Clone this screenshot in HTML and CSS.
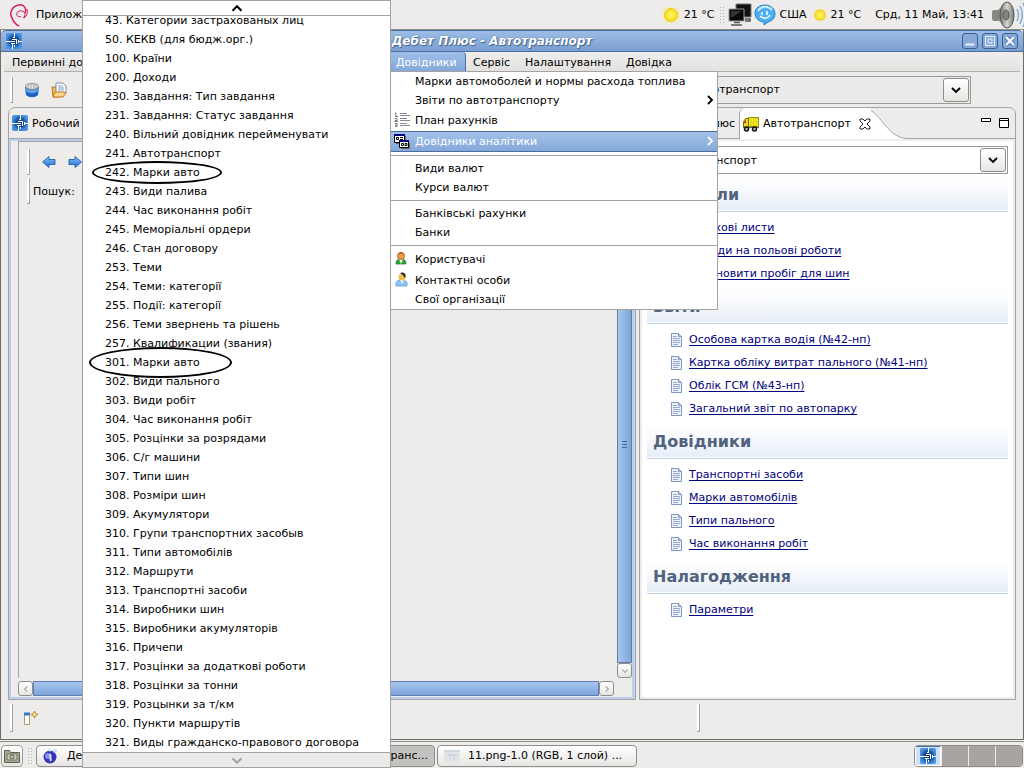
FILE: index.html
```html
<!DOCTYPE html>
<html lang="uk">
<head>
<meta charset="utf-8">
<title>Дебет Плюс - Автотранспорт</title>
<link rel="stylesheet" href="styles.css">
</head>
<body>
<svg class="defs" aria-hidden="true">
  <defs>
    <radialGradient id="blue"><stop offset="0" stop-color="#0f2f60"/><stop offset=".6" stop-color="#1d58a4"/><stop offset="1" stop-color="#4a94e4"/></radialGradient>
    <linearGradient id="arrow" x2="0" y2="1"><stop offset="0" stop-color="#8cc4fa"/><stop offset="1" stop-color="#1a68c8"/></linearGradient>
    <radialGradient id="sun"><stop offset="0" stop-color="#fff56a"/><stop offset="1" stop-color="#f6dc1e"/></radialGradient>
    <linearGradient id="cone"><stop offset="0" stop-color="#6a6c68"/><stop offset=".5" stop-color="#d6d8d2"/><stop offset="1" stop-color="#777974"/></linearGradient>
    <symbol id="logo" viewBox="0 0 16 16"><rect width="16" height="16" rx="2" fill="url(#blue)"/><path d="M8.500 0v5M6 6.500h5M0 8.500h9M5 10.500h4M6.500 11v5M8.500 12v2M10.500 6v5M12.500 7v3M12 8.500h4M7 4.500h2" stroke="#fff" fill="none"/></symbol>
    <symbol id="doc" viewBox="0 0 11 14"><path d="M.5.5h7l3 3v10H.5z" fill="#eef3fb" stroke="#7e95c0"/><path d="M7.500.5v3h3" fill="#b4c3e0" stroke="#7e95c0"/><path d="M2 3.500h4M2 5.500h7M2 7.500h7M2 9.500h7M2 11.500h5" stroke="#94a8d0"/></symbol>
    <symbol id="down" viewBox="0 0 12 8"><path d="M2 2l4 4 4-4" fill="none" stroke="currentColor" stroke-width="1.800"/></symbol>
    <symbol id="right" viewBox="0 0 8 12"><path d="M2 2l4 4-4 4" fill="none" stroke="currentColor" stroke-width="1.800"/></symbol>
    <symbol id="weather" viewBox="0 0 20 20"><path d="M10 0l2 4 4-2v4l4 1-3 3 3 3-4 1v4l-4-2-2 4-2-4-4 2v-4l-4-1 3-3-3-3 4-1V2l4 2z" fill="#f6ec9c"/><circle cx="10" cy="10" r="6.500" fill="url(#sun)" stroke="#ecc42c"/></symbol>
  </defs>
</svg>

<header class="panel">
  <svg class="swirl" viewBox="0 0 20 24"><path d="M12 13.500c-3 1-5-1-4-3.500 2-4 8-2 8 1 0 1 0 3-2 4" fill="none" stroke="#d9185a" stroke-width="1"/><path d="M16 10c2-4-1-9-6-8-7 1-10 8-7 13 1 3 3 6 7 8" fill="none" stroke="#d9185a" stroke-width="1.500"/><path d="M18 6c1 3 0 7-3 9" fill="none" stroke="#d9185a" stroke-width="1"/></svg>
  <span class="apps">Прилож</span>
  <div class="tray">
    <svg class="ic20"><use href="#weather"/></svg><span class="temp">21 °C</span>
    <span class="dots"></span>
    <svg class="ic24" viewBox="0 0 24 24"><path d="M8 1h15v13H8z" fill="#111" stroke="#777"/><path d="M1 6h15v12H1z" fill="#080808" stroke="#999"/><path d="M3 8h11L3 15z" fill="#333"/><path d="M6 19.500h6M3 22h11M17 16h5v2h-5" stroke="#555" stroke-width="1.500" fill="none"/></svg>
    <svg class="ic22" viewBox="0 0 22 22"><path d="M11 1c6 0 10 4 10 9 0 4-3 7-7 8l-4 3v-3C5 18 1 14 1 9c0-5 5-8 10-8z" fill="#4eaef2" stroke="#2580c8"/><path d="M4 7c3-5 10-6 14-1" stroke="#cdeafd" stroke-width="2" fill="none"/><path d="M8 8v3M13 7v4M6 12c3 3 8 3 10-1" stroke="#fff" stroke-width="1.500" fill="none"/></svg>
    <span class="kbd">США</span>
    <svg class="ic16"><use href="#weather"/></svg><span>21 °C</span>
    <time class="clock">Срд, 11 Май, 13:41</time>
    <svg class="speaker" viewBox="0 0 32 28"><path d="M1 9h5v11H1c-2-3-2-8 0-11z" fill="#888"/><path d="M6 9l8-8v26l-8-8z" fill="url(#cone)"/><ellipse cx="15" cy="14" rx="7" ry="13" fill="url(#cone)" stroke="#555752"/><ellipse cx="14" cy="14" rx="3" ry="5" fill="#81837e" stroke="#555"/><path d="M25 8c2 4 2 8 0 12M28 5c3 6 3 12 0 18M31 2c4 8 4 16 0 24" fill="none" stroke="#86acd8" stroke-width="1.500"/></svg>
  </div>
</header>

<main class="window">
  <div class="titlebar">
    <svg class="ic16"><use href="#logo"/></svg>
    <h1>Дебет Плюс - Автотранспорт</h1>
    <button class="wbtn" aria-label="Згорнути"><svg viewBox="0 0 14 14"><path d="M2.500 9.500h9v2h-9z" fill="#e8f0fb"/></svg></button>
    <button class="wbtn" aria-label="Розгорнути"><svg viewBox="0 0 14 14"><path d="M2.500 2.500h9v9h-9zM5 5h4v4H5z" fill="none" stroke="#e4edf9"/></svg></button>
    <button class="wbtn" aria-label="Закрити"><svg viewBox="0 0 14 14"><path d="M3 3l8 8M11 3l-8 8" stroke="#315e92" stroke-width="4"/><path d="M3 3l8 8M11 3l-8 8" stroke="#eef4fc" stroke-width="2.500"/></svg></button>
  </div>

  <nav class="menubar">
    <button class="mitem first">Первинні до</button>
    <div class="menuhost">
      <button class="mitem open">Довідники</button>
      <div class="dropdown">
        <button class="row">Марки автомоболей и нормы расхода топлива</button>
        <button class="row">Звіти по автотранспорту<svg class="sub"><use href="#right"/></svg></button>
        <button class="row tall"><svg class="ric" viewBox="0 0 16 16"><path d="M6 1.500h7M6 3.500h10M6 6.500h7M6 8.500h10M6 11.500h7M6 13.500h10" stroke="#888"/><path d="M1 1h1v3M1 4.500h3M1 6.500h2v2H1v1h3M1 11.500h2v3H1M1 13h2" stroke="#777" fill="none"/></svg>План рахунків</button>
        <button class="row tall active"><svg class="ric" viewBox="0 0 16 16"><path d="M2 2h10v8H2zM7 9h9v6H7z" fill="#666"/><path d="M.5.5h10v8H.5z" fill="#fff" stroke="#000"/><path d="M2.500 3.500h2v2h-2zM6 3.500h3M6 5.500h3" fill="none" stroke="#000"/><path d="M5.500 6.500h9v7h-9z" fill="#fff" stroke="#000"/><path d="M0 1h11M5 7h10" stroke="#000080" stroke-width="2"/><path d="M7.500 9.500h2v2h-2zM11 9.500h2v2h-2z" fill="none" stroke="#000"/></svg>Довідники аналітики<svg class="sub"><use href="#right"/></svg></button>
        <hr>
        <button class="row">Види валют</button>
        <button class="row">Курси валют</button>
        <hr>
        <button class="row">Банківські рахунки</button>
        <button class="row">Банки</button>
        <hr>
        <button class="row tall"><svg class="ric" viewBox="0 0 16 16"><path d="M2 13c0-4 2-5 5-5s5 1 5 5z" fill="#2ea836" stroke="#187020" stroke-width=".7"/><path d="M5 8h4l-2 5z" fill="#fff"/><circle cx="7" cy="5" r="3.500" fill="#f0a044" stroke="#a4521a" stroke-width=".8"/><path d="M4 4c1-4 5-4 6 0-2-2-4-1-6 0z" fill="#b85c1c"/></svg>Користувачі</button>
        <button class="row tall"><svg class="ric" viewBox="0 0 16 16"><path d="M2 14c-1-5 2-6 5-6 4 0 7 1 6 6z" fill="#8fc4f2" stroke="#5796d0" stroke-width=".7"/><path d="M6 8l2 4 2-4z" fill="#e8f4ff"/><circle cx="8" cy="5" r="3.500" fill="#e8c04c"/><path d="M6 1c4-2 7 2 5 5L9 3z" fill="#222"/></svg>Контактні особи</button>
        <button class="row last">Свої організації</button>
      </div>
    </div>
    <button class="mitem">Сервіс</button>
    <button class="mitem">Налаштування</button>
    <button class="mitem">Довідка</button>
  </nav>

  <div class="toolbar">
    <span class="grip"></span>
    <button class="tool" aria-label="База"><svg class="ic16" viewBox="0 0 16 16"><path d="M1 5l1 8c3 3 9 3 12 0l1-8z" fill="#1c62bc"/><path d="M1 6c4 3 10 3 14 0l-1 3c-3 3-9 3-12 0z" fill="#5ca4ee"/><ellipse cx="8" cy="4.500" rx="6.500" ry="3" fill="#e4e4e4" stroke="#888"/><path d="M4 2v4M7 1v6M10 1v6M12 2v4" stroke="#aaa"/></svg></button>
    <button class="tool" aria-label="Відкрити"><svg class="ic16" viewBox="0 0 16 16"><path d="M1 5h4l1-2h2v12H2z" fill="#f0ba58" stroke="#b87820"/><path d="M5 1h7l3 3v7H5z" fill="#fff" stroke="#7d8cb0"/><path d="M7 4h5M7 6h6M7 8h6" stroke="#7d9ac8"/><path d="M4 10h9l2 1-3 4H2z" fill="#fbd686" stroke="#b87820"/></svg></button>
    <label class="combo grey"><select aria-label="Модуль"><option>Автотранспорт</option></select><span class="cbtn"><svg><use href="#down"/></svg></span></label>
  </div>

  <div class="panes">
    <section class="pane left">
      <div class="tabs"><svg class="ic16"><use href="#logo"/></svg><span>Робочий</span></div>
      <div class="view">
        <div class="tools">
          <div class="nav"><span class="grip"></span>
            <button class="tool" aria-label="Назад"><svg viewBox="0 0 14 12"><path d="M.5 6L7 .5v3h6v5H7v3z" fill="url(#arrow)" stroke="#2b6cb8"/></svg></button>
            <button class="tool" aria-label="Вперед"><svg viewBox="0 0 14 12"><path d="M13.500 6L7 .5v3H1v5h6v3z" fill="url(#arrow)" stroke="#2b6cb8"/></svg></button></div>
          <div class="find"><span class="grip"></span><span>Пошук:</span></div>
        </div>
        <div class="vscroll"><span class="vthumb"><i></i></span><button class="sbtn" aria-label="Вниз"><svg><use href="#down"/></svg></button></div>
        <div class="hscroll"><button class="sbtn back" aria-label="Ліворуч"><svg><use href="#right"/></svg></button><span class="hthumb"></span><button class="sbtn" aria-label="Праворуч"><svg><use href="#right"/></svg></button></div>
      </div>
    </section>

    <section class="pane right">
      <div class="tabs">
        <span class="inactive">Дебет Плюс</span>
        <div class="tab">
          <svg class="ic16" viewBox="0 0 16 16"><path d="M5.500 1.500h10v9h-10z" fill="#f8ec20" stroke="#988c10"/><path d="M8 2v8M10.500 2v8M13 2v8" stroke="#d8c818"/><path d="M.5 11V6l2-3.500h3V11z" fill="#f0d820" stroke="#776b10"/><path d="M1 6l2-2v3H1z" fill="#c03030"/><path d="M0 11.500h16" stroke="#665" stroke-width="1"/><circle cx="3.500" cy="13" r="2" fill="#bbb" stroke="#111" stroke-width="1.500"/><circle cx="11.500" cy="13" r="2" fill="#bbb" stroke="#111" stroke-width="1.500"/></svg>
          <span>Автотранспорт</span>
          <svg class="close" viewBox="0 0 12 12"><path d="M1 1h3l2 2 2-2h3v2L8 6l3 3v2H8L6 9l-2 2H1V9l3-3-3-3z" fill="#fff" stroke="#222"/></svg>
        </div>
        <svg class="curve" viewBox="0 0 48 32"><path d="M0 32V.5C20 .5 26 31.500 47 31.500V32z" fill="#fff"/><path d="M0 .5C20 .5 24 31.500 47 31.500" fill="none" stroke="#a5a3a1"/></svg>
        <div class="panebtns"><svg class="pmin" viewBox="0 0 10 4"><path d="M.5.5h9v3h-9z" fill="#fff" stroke="#000"/></svg><svg class="pmax" viewBox="0 0 10 10"><path d="M.5.5h9v9h-9z" fill="#fff" stroke="#000"/><path d="M0 2.500h10" stroke="#000"/></svg></div>
      </div>
      <div class="page">
        <label class="combo"><select aria-label="Розділ"><option>Автотранспорт</option></select><span class="cbtn"><svg><use href="#down"/></svg></span></label>
        <div class="sections">
          <h2>Журнали</h2>
          <ul>
            <li><svg class="doc"><use href="#doc"/></svg><a href="#">Шляхові листи</a></li>
            <li><svg class="doc"><use href="#doc"/></svg><a href="#">Наряди на польові роботи</a></li>
            <li><svg class="doc"><use href="#doc"/></svg><a href="#">Встановити пробіг для шин</a></li>
          </ul>
          <h2>Звіти</h2>
          <ul>
            <li><svg class="doc"><use href="#doc"/></svg><a href="#">Особова картка водія (№42-нп)</a></li>
            <li><svg class="doc"><use href="#doc"/></svg><a href="#">Картка обліку витрат пального (№41-нп)</a></li>
            <li><svg class="doc"><use href="#doc"/></svg><a href="#">Облік ГСМ (№43-нп)</a></li>
            <li><svg class="doc"><use href="#doc"/></svg><a href="#">Загальний звіт по автопарку</a></li>
          </ul>
          <h2>Довідники</h2>
          <ul>
            <li><svg class="doc"><use href="#doc"/></svg><a href="#">Транспортні засоби</a></li>
            <li><svg class="doc"><use href="#doc"/></svg><a href="#">Марки автомобілів</a></li>
            <li><svg class="doc"><use href="#doc"/></svg><a href="#">Типи пального</a></li>
            <li><svg class="doc"><use href="#doc"/></svg><a href="#">Час виконання робіт</a></li>
          </ul>
          <h2>Налагодження</h2>
          <ul>
            <li><svg class="doc"><use href="#doc"/></svg><a href="#">Параметри</a></li>
          </ul>
        </div>
      </div>
    </section>
  </div>

  <footer class="status">
    <span class="grip"></span>
    <button class="tool" aria-label="Нове подання"><svg class="ic16" viewBox="0 0 16 16"><path d="M1.500 3.500h5v11h-5z" fill="#fff" stroke="#a8a070"/><path d="M1 4h6" stroke="#3878c0" stroke-width="3"/><path d="M11.500 1l1 2.500L15 4.500l-2.500 1-1 2.500-1-2.500-2.500-1 2.500-1z" fill="#fff0a0" stroke="#b88c18"/></svg></button>
    <span class="mid"></span>
  </footer>
</main>

<footer class="taskbar">
  <button class="desk" aria-label="Робочий стіл"><svg class="ic16" viewBox="0 0 16 16"><path d="M.5 2.500h5l1 2h9v10H.5z" fill="#a8ac94" stroke="#5c6050"/><path d="M3 6h10v6H3z" fill="#c6c9b4" stroke="#74785f"/><circle cx="8" cy="9" r="2" fill="none" stroke="#5c6050"/></svg></button>
  <span class="dots"></span>
  <button class="task"><svg class="ic16" viewBox="0 0 16 16"><circle cx="7" cy="9" r="6.500" fill="#3434b8"/><circle cx="5" cy="8" r="3" fill="#8c90ec"/><path d="M7 6c1 2 0 5 1 7" stroke="#dde" stroke-width="2"/><circle cx="12" cy="3" r="2" fill="#c8dcf0"/><circle cx="7" cy="2" r="1.500" fill="#d8e6f4"/></svg><span>Дебет Плюс</span></button>
  <button class="task pressed"><span>Автотранс...</span></button>
  <button class="task"><svg class="ic16" viewBox="0 0 16 16"><path d="M0 2h16v12H0z" fill="#e4e4e4"/><path d="M0 3h16M3 7h11M6 5v6M10 7v5" stroke="#bccbe0"/></svg><span>11.png-1.0 (RGB, 1 слой) ...</span></button>
  <div class="pager"><span class="cur"><svg class="ic16"><use href="#logo"/></svg></span><span></span><span></span><span></span></div>
</footer>

<div class="submenu">
  <button class="scroll up" aria-label="Вгору"><svg><use href="#down"/></svg></button>
  <ul>
    <li>43. Категории застрахованых лиц</li>
    <li>50. КЕКВ (для бюдж.орг.)</li>
    <li>100. Країни</li>
    <li>200. Доходи</li>
    <li>230. Завдання: Тип завдання</li>
    <li>231. Завдання: Статус завдання</li>
    <li>240. Вільний довідник перейменувати</li>
    <li>241. Автотранспорт</li>
    <li>242. Марки авто<span class="ring small"></span></li>
    <li>243. Види палива</li>
    <li>244. Час виконання робіт</li>
    <li>245. Меморіальні ордери</li>
    <li>246. Стан договору</li>
    <li>253. Теми</li>
    <li>254. Теми: категорії</li>
    <li>255. Події: категорії</li>
    <li>256. Теми звернень та рішень</li>
    <li>257. Квалификации (звания)</li>
    <li>301. Марки авто<span class="ring"></span></li>
    <li>302. Види пального</li>
    <li>303. Види робіт</li>
    <li>304. Час виконання робіт</li>
    <li>305. Розцінки за розрядами</li>
    <li>306. С/г машини</li>
    <li>307. Типи шин</li>
    <li>308. Розміри шин</li>
    <li>309. Акумулятори</li>
    <li>310. Групи транспортних засобыв</li>
    <li>311. Типи автомобілів</li>
    <li>312. Маршрути</li>
    <li>313. Транспортні засоби</li>
    <li>314. Виробники шин</li>
    <li>315. Виробники акумуляторів</li>
    <li>316. Причепи</li>
    <li>317. Розцінки за додаткові роботи</li>
    <li>318. Розцінки за тонни</li>
    <li>319. Розцынки за т/км</li>
    <li>320. Пункти маршрутів</li>
    <li>321. Виды гражданско-правового договора</li>
  </ul>
  <button class="scroll end" aria-label="Вниз"><svg><use href="#down"/></svg></button>
</div>
</body>
</html>
```
FILE: styles.css
```css
* { box-sizing: border-box; }
body {
  margin: 0;
  height: 100vh;
  display: flex;
  flex-direction: column;
  overflow: hidden;
  position: relative;
  background: #edecea;
  color: #000;
  font: 11px/19px "DejaVu Sans", sans-serif;
  white-space: nowrap;
}
button, select { font: inherit; color: inherit; margin: 0; padding: 0; border: 0; background: none; }
ul { list-style: none; margin: 0; padding: 0; }
svg { display: block; flex: none; }
.defs { position: absolute; width: 0; height: 0; }
.ic16 { width: 16px; height: 16px; }
.ic20 { width: 20px; height: 20px; }
.ic22 { width: 22px; height: 22px; }
.ic24 { width: 24px; height: 24px; }

/* Desktop panel */
.panel { flex: none; height: 30px; display: flex; align-items: center; padding-left: 9px; gap: 7px; border-bottom: 1px solid #8d8b88; }
.swirl { width: 20px; height: 24px; }
.tray { margin-left: auto; display: flex; align-items: center; gap: 2px; }
.dots { width: 5px; height: 18px; margin: 0 2px; background: radial-gradient(circle, #b5b2ae 1px, transparent 1px) 0 0 / 3px 3px; }
.temp { margin-left: 1px; }
.kbd { margin: 0 4px 0 2px; }
.clock { margin: 0 6px 0 12px; }
.speaker { width: 32px; height: 28px; }

/* Application window */
.window { flex: 1; min-height: 0; display: flex; flex-direction: column; border: solid #6d6b68; border-width: 0 1px 1px; }
.titlebar { flex: none; height: 22px; display: flex; align-items: center; gap: 4px; padding: 0 5px; background: linear-gradient(#9dbce6, #7a9fd2); border: solid #4a6f9f; border-width: 1px 0; border-radius: 5px 5px 0 0; }
.titlebar h1 { flex: 1; margin: 0; text-align: center; font-size: 12px; font-weight: bold; font-style: italic; color: #fff; text-shadow: 1px 1px 1px #3f628f, 0 0 1px #3f628f; }
.wbtn { width: 16px; height: 16px; border: 1px solid #35608f; border-radius: 3px; background: #88aadb; }
.wbtn svg { width: 14px; height: 14px; }
.menubar { flex: none; height: 20px; display: flex; background: linear-gradient(#efeeec, #e3e2e0); border-bottom: 1px solid #b3b1ae; margin: 0 3px; }
.mitem { height: 20px; padding: 0 8px 0 7px; text-align: left; }
.mitem.first { width: 386px; padding: 0 8px; }
.mitem.open { width: 76px; padding: 0 6px; color: #fff; background: linear-gradient(#9dbfe9, #83a7d8); border-right: 1px solid #4a6f9f; border-radius: 0 4px 0 0; }
.menuhost { position: relative; }
.dropdown { position: absolute; z-index: 5; top: 19px; left: 0; width: 328px; background: #fff; border: 1px solid #a5a3a1; display: flex; flex-direction: column; }
.row { position: relative; height: 19px; padding: 0 24px; text-align: left; line-height: 18px; }
.row.tall { height: 21px; line-height: 20px; }
.row.last { height: 18px; }
.row.active { color: #fff; background: linear-gradient(#a3c2ea, #84a8d9); border: solid #4a6f9f; border-width: 1px 0; line-height: 19px; }
.dropdown hr { width: 100%; margin: 3px 0; border: 0; border-top: 1px solid #a5a3a1; }
.ric { position: absolute; left: 3px; top: 2px; width: 16px; height: 16px; }
.sub { position: absolute; right: 3px; top: 3px; width: 8px; height: 12px; }

.toolbar { flex: none; height: 35px; display: flex; align-items: center; padding: 0 52px 0 9px; gap: 11px; }
.grip { flex: none; width: 3px; height: 26px; border: solid #a5a3a1; border-width: 0 1px 1px 0; background: #fff; }
.tool svg { display: block; }
.combo { display: flex; align-items: stretch; height: 28px; border: 1px solid #9b9997; background: #fff; }
.combo select { flex: 1; appearance: none; padding-left: 21px; outline: 0; }
.combo.grey { margin-left: auto; width: 292px; background: #ebeae8; }
.combo.grey select { padding-left: 12px; }
.cbtn { width: 26px; margin: 1px; display: grid; place-items: center; border: 1px solid #8f8d8a; border-radius: 3px; background: linear-gradient(#fff, #e6e5e3); }
.cbtn svg { width: 12px; height: 8px; }

.panes { flex: 1; min-height: 0; display: grid; grid-template-columns: 628fr 377fr; gap: 3px; padding: 0 7px; }
.pane { min-width: 0; display: flex; flex-direction: column; border: 1px solid #a5a3a1; border-radius: 7px 7px 0 0; }
.tabs { flex: none; height: 31px; display: flex; align-items: center; gap: 4px; border-bottom: 1px solid #a5a3a1; }
.left .tabs { padding-left: 3px; }
.view { flex: 1; min-height: 0; display: grid; grid-template-columns: 1fr 15px; grid-template-rows: 1fr 15px; row-gap: 3px; column-gap: 3px; border: solid #b9cfed; border-width: 2px 3px 2px 2px; padding: 0 0 1px 7px; }
.tools { display: flex; flex-direction: column; gap: 3px; padding: 7px 0 0 8px; border: solid #a5a3a1; border-width: 1px 0 0 1px; }
.nav, .find { display: flex; align-items: center; }
.nav { gap: 12px; }
.nav .tool svg { width: 14px; height: 12px; }
.find { gap: 3px; }
.vscroll { display: flex; flex-direction: column; }
.vthumb { flex: 1; display: grid; place-items: center; background: linear-gradient(90deg, #a6c6ee, #7fa4d8); border: 1px solid #5b80b0; }
.vthumb i { width: 5px; height: 7px; margin-bottom: -84px; background: repeating-linear-gradient(#41689c 0 1px, transparent 1px 3px); }
.sbtn { flex: none; width: 15px; height: 15px; display: grid; place-items: center; border: 1px solid #8f8d8a; border-radius: 3px; background: linear-gradient(#fff, #e6e5e3); color: #a8a6a3; }
.sbtn svg { width: 8px; height: 8px; }
.back svg { transform: scaleX(-1); }
.hscroll { display: flex; }
.hthumb { flex: 1; background: linear-gradient(#a6c6ee, #7fa4d8); border: 1px solid #5b80b0; }

.right .tabs { gap: 0; }
.inactive { width: 99px; padding-right: 4px; text-align: right; }
.tab { position: relative; z-index: 1; height: 31px; align-self: flex-start; display: flex; align-items: center; gap: 4px; padding-left: 3px; background: #fff; border-left: 1px solid #a5a3a1; border-radius: 6px 0 0 0; }
.close { width: 12px; height: 12px; margin-left: 4px; }
.curve { align-self: flex-start; width: 48px; height: 32px; margin: -1px 0 0 -10px; }
.panebtns { margin-left: auto; display: flex; gap: 8px; padding-right: 6px; }
.pmin { width: 10px; height: 4px; }
.pmax { width: 10px; height: 10px; }
.page { flex: 1; min-height: 0; background: #fff; border: 2px solid #edecea; padding: 5px 5px 0; }
.sections { padding-top: 6px; }
h2 { height: 32px; margin: 0; padding-left: 6px; font-size: 16px; font-weight: bold; line-height: 30px; color: #50627d; background: linear-gradient(#fff, #e6edf7); border-bottom: 1px solid #bcd0e8; box-shadow: inset 0 -1px #fff; }
.sections ul { padding: 4px 0 7px 24px; }
.sections li { height: 23px; display: flex; align-items: center; gap: 7px; }
.doc { width: 11px; height: 14px; }
a { color: #00007c; text-decoration: underline; text-underline-offset: 2px; }

.status { flex: none; height: 39px; display: flex; align-items: flex-start; gap: 10px; padding: 4px 0 0 9px; }
.status .grip { height: 28px; }
.status .tool { margin-top: 6px; }
.mid { width: 3px; height: 28px; margin-left: auto; margin-right: 323px; border: solid #a5a3a1; border-width: 0 1px 1px 0; background: #fff; }

/* Task list */
.taskbar { flex: none; height: 27px; margin-top: 1px; display: flex; align-items: center; gap: 2px; padding: 1px 1px 0; border-top: 1px solid #8d8b88; }
.desk { width: 22px; height: 22px; display: grid; place-items: center; border: 1px solid #a09e9b; border-radius: 4px; background: linear-gradient(#fff, #e6e5e3); }
.task { width: 200px; height: 22px; display: flex; align-items: center; gap: 8px; padding: 0 6px; border: 1px solid #8f8d8a; border-radius: 4px; background: linear-gradient(#fff, #e6e5e3); }
.task.pressed { width: 197px; justify-content: flex-end; background: #c4c2bf; }
.pager { margin-left: auto; display: flex; gap: 1px; border: 1px solid #8f8d8a; border-radius: 4px; background: #edecea; overflow: hidden; }
.pager span { width: 26px; height: 20px; background: #a8a4a1; display: grid; place-items: center; }
.pager .cur { background: #cfe0f8; border: 1px solid #fff; border-top: 1px solid #4a76b4; }

/* Cascading list */
.submenu { position: absolute; z-index: 10; top: 0; bottom: 0; left: 82px; width: 309px; display: flex; flex-direction: column; background: #fff; border: 1px solid #a5a3a1; }
.submenu ul { flex: 1; min-height: 0; overflow: hidden; display: flex; flex-direction: column; justify-content: flex-end; }
.submenu li { position: relative; flex: none; height: 19px; padding-left: 22px; line-height: 19px; }
.scroll { flex: none; height: 15px; display: grid; place-items: center; border-bottom: 1px solid #a5a3a1; }
.scroll svg { width: 14px; height: 9px; }
.up svg { transform: scaleY(-1); }
.end { background: #ebeae8; color: #a5a3a1; border-bottom: 0; border-top: 1px solid #a5a3a1; }
.ring { position: absolute; left: 6px; top: -6px; width: 143px; height: 31px; border: 2px solid #000; border-radius: 50%; }
.ring.small { left: 9px; top: -2px; width: 130px; height: 23px; }
```
